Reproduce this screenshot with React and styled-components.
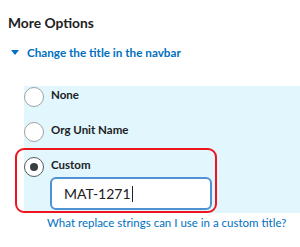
import React from 'react';
import styled, { createGlobalStyle } from 'styled-components';

const GlobalStyle = createGlobalStyle`
  html, body {
    margin: 0;
    padding: 0;
    background: #ffffff;
  }
  body {
    font-family: Lato, "Open Sans", sans-serif;
    color: #202122;
  }
`;

const Page = styled.div`
  width: 300px;
  height: 247px;
  overflow: hidden;
  padding-top: 15px;
  box-sizing: border-box;
`;

const Heading = styled.h3`
  margin: 0 0 0 8px;
  font-size: 13.8px;
  line-height: 16px;
  font-weight: 700;
  color: #202122;
`;

const Disclosure = styled.div`
  display: flex;
  align-items: center;
  gap: 8px;
  margin: 13px 0 0 11px;
  color: #006fbf;
  font-size: 11.7px;
  line-height: 16px;
  font-weight: 700;
`;

const Caret = styled.span`
  width: 0;
  height: 0;
  border-left: 4px solid transparent;
  border-right: 4px solid transparent;
  border-top: 5px solid #006fbf;
`;

const Panel = styled.div`
  margin: 26px 0 0 24px;
  height: 127px;
  background: #e2f6fd;
  display: flex;
  flex-direction: column;
  gap: 15px;
  padding-top: 1px;
  box-sizing: border-box;
`;

const Option = styled.div`
  position: relative;
  display: flex;
  flex-direction: column;
`;

const OptionRow = styled.label`
  display: flex;
  align-items: flex-start;
  gap: 7px;
`;

const Radio = styled.span`
  position: relative;
  flex: none;
  width: 20px;
  height: 20px;
  box-sizing: border-box;
  border-radius: 50%;
  background: #ffffff;
  border: 1px solid ${({ checked }) => (checked ? '#565a5c' : '#9ea2a4')};

  &::after {
    content: '';
    display: ${({ checked }) => (checked ? 'block' : 'none')};
    position: absolute;
    left: 5px;
    top: 5px;
    width: 8px;
    height: 8px;
    border-radius: 50%;
    background: #3b3e40;
  }
`;

const OptionLabel = styled.span`
  font-size: 11.5px;
  line-height: 14px;
  font-weight: 700;
  padding-top: 1px;
  color: #202122;
`;

const Highlight = styled.span`
  position: absolute;
  left: -9px;
  top: -9px;
  width: 202px;
  height: 65px;
  box-sizing: border-box;
  border: 2px solid #f0141e;
  border-radius: 9px;
  pointer-events: none;
`;

const TextInput = styled.div`
  flex: none;
  margin: 0 0 0 26px;
  width: 162px;
  height: 33px;
  box-sizing: border-box;
  border: 2px solid #4d93d4;
  border-radius: 6px;
  background: #ffffff;
  display: flex;
  align-items: center;
  padding-left: 12px;
  font-size: 14px;
  color: #202122;
`;

const Cursor = styled.span`
  display: inline-block;
  width: 1px;
  height: 16px;
  background: #202122;
  margin-left: 1px;
`;

const HelpLink = styled.a`
  display: block;
  margin: 3px 0 0 47px;
  font-size: 11.5px;
  line-height: 14px;
  color: #006fbf;
  text-decoration: none;
  white-space: nowrap;
`;

const options = [
  { label: 'None', checked: false },
  { label: 'Org Unit Name', checked: false },
];

export default function App() {
  return (
    <Page>
      <GlobalStyle />
      <Heading>More Options</Heading>
      <Disclosure>
        <Caret />
        Change the title in the navbar
      </Disclosure>
      <Panel>
        {options.map((o) => (
          <Option key={o.label}>
            <OptionRow>
              <Radio checked={o.checked} />
              <OptionLabel>{o.label}</OptionLabel>
            </OptionRow>
          </Option>
        ))}
        <Option>
          <Highlight />
          <OptionRow>
            <Radio checked />
            <OptionLabel>Custom</OptionLabel>
          </OptionRow>
          <TextInput>
            MAT-1271
            <Cursor />
          </TextInput>
        </Option>
      </Panel>
      <HelpLink href="#">What replace strings can I use in a custom title?</HelpLink>
    </Page>
  );
}
